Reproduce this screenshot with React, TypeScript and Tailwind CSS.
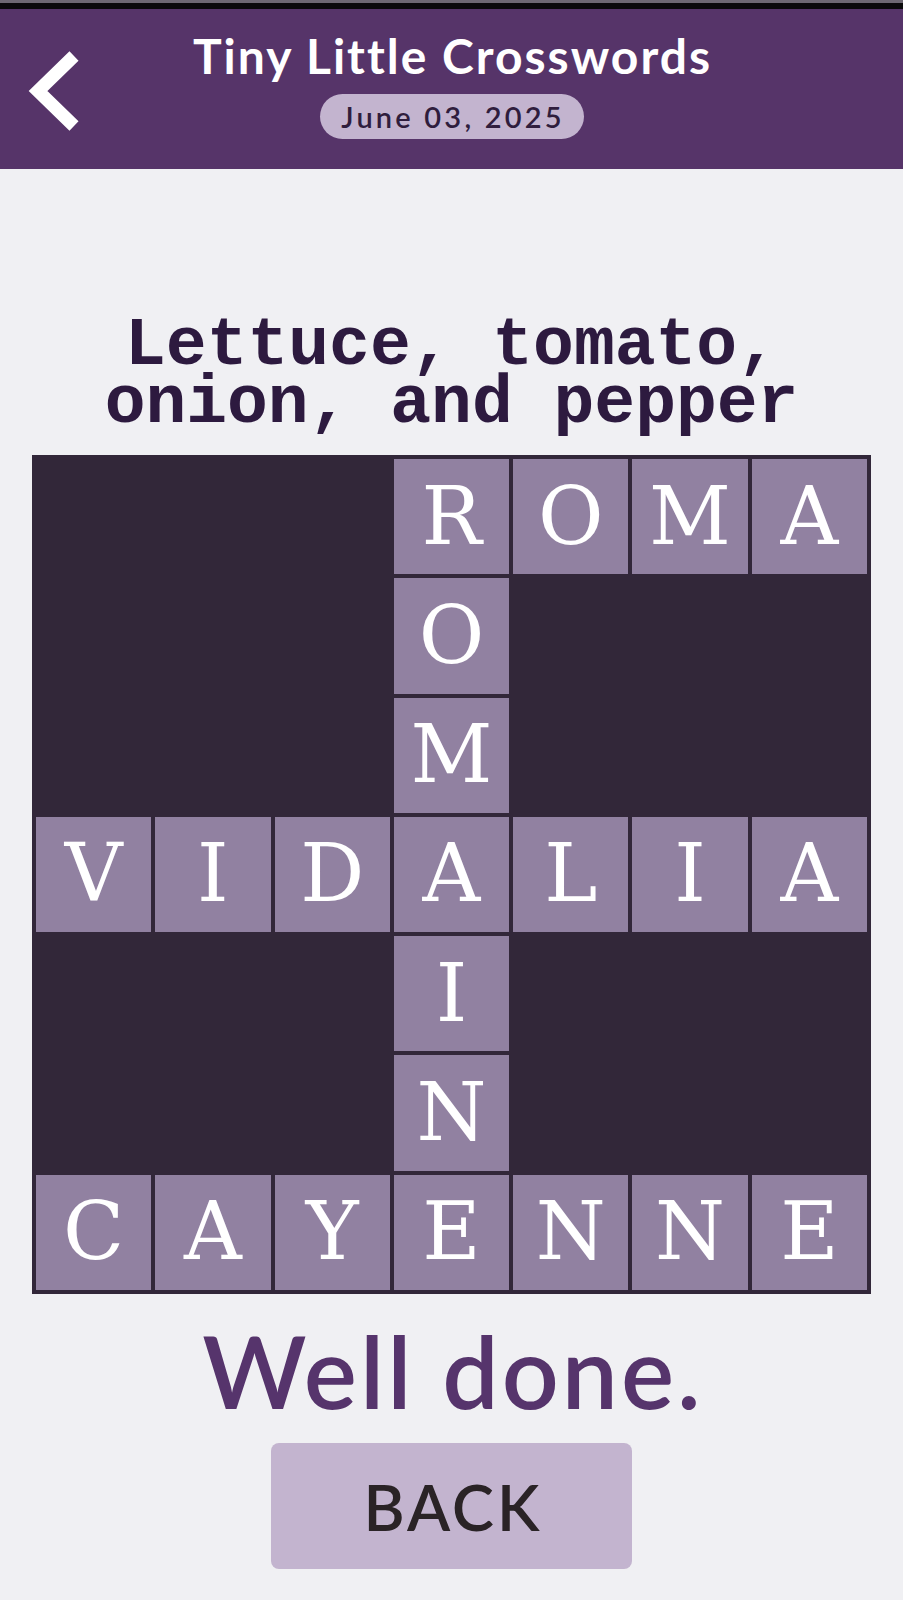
import React from "react";

// 7x7 puzzle layout; "#" marks a blocked square.
const ROWS = [
  "###ROMA",
  "###O###",
  "###M###",
  "VIDALIA",
  "###I###",
  "###N###",
  "CAYENNE",
];

function BackChevron() {
  return (
    <svg width="58" height="84" viewBox="0 0 58 84" className="block">
      <polyline
        points="47,5 11,40 47,75"
        fill="none"
        stroke="#ffffff"
        strokeWidth="13"
        strokeLinecap="butt"
        strokeLinejoin="miter"
      />
    </svg>
  );
}

function Cell({ ch }: { ch: string }) {
  if (ch === "#") return <div className="bg-[#322739]" />;
  return (
    <div className="bg-[#9181a1] flex items-center justify-center">
      <span
        className="text-white text-[80px] leading-none"
        style={{ fontFamily: '"DejaVu Serif", serif' }}
      >
        {ch}
      </span>
    </div>
  );
}

export default function App() {
  const cells = ROWS.join("").split("");
  return (
    <div
      className="min-h-[1600px] w-[903px] bg-[#f0f0f3] flex flex-col"
      style={{ fontFamily: "Lato, 'Noto Sans', sans-serif" }}
    >
      {/* status strip */}
      <div className="h-[3px] bg-[#6e6873]" />
      <div className="h-[6px] bg-[#0b0a0c]" />

      {/* header */}
      <header className="h-[160px] bg-[#563469] grid grid-cols-[1fr_auto_1fr] items-start">
        <div className="pt-[42px] pl-[27px]">
          <BackChevron />
        </div>
        <div className="flex flex-col items-center pt-[19px]">
          <h1 className="text-white text-[48px] font-bold leading-[56px] tracking-[2px] pl-[2px]">
            Tiny Little Crosswords
          </h1>
          <div className="mt-[10px] h-[45px] w-[264px] rounded-full bg-[#c3b4cf] flex items-center justify-center">
            <span className="text-[#2f1d3d] text-[29px] font-semibold leading-none tracking-[3.2px] pl-[3px]">
              June 03, 2025
            </span>
          </div>
        </div>
        <div />
      </header>

      {/* clue */}
      <p
        className="mt-[148px] self-center w-[720px] text-center text-[#2d1a3f] text-[68px] font-bold leading-[58px]"
        style={{ fontFamily: '"Liberation Mono", monospace' }}
      >
        Lettuce, tomato, onion, and pepper
      </p>

      {/* grid */}
      <div className="mt-[22px] self-center w-[839px] h-[839px] bg-[#322739] p-[4px] grid grid-cols-7 grid-rows-7 gap-[4px]">
        {cells.map((ch, i) => (
          <Cell key={i} ch={ch} />
        ))}
      </div>

      <div className="mt-[16px] text-center text-[#56346c] text-[100px] font-semibold leading-[120px] tracking-[3px] pl-[3px]">
        Well done.
      </div>

      <div className="mt-[13px] self-center w-[361px] h-[126px] rounded-[8px] bg-[#c3b4cf] flex items-center justify-center">
        <span className="text-[#2a2326] text-[63px] font-semibold leading-none tracking-[3px] pl-[3px]">
          BACK
        </span>
      </div>
    </div>
  );
}
